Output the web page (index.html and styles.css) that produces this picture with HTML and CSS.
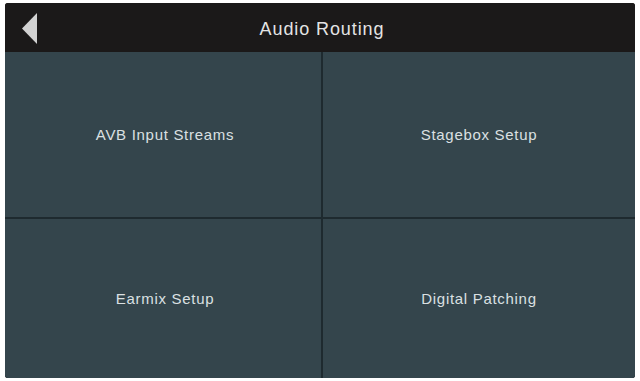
FILE: index.html
```html
<!DOCTYPE html>
<html lang="en">

<head>
    <meta charset="UTF-8">
    <meta name="viewport" content="width=device-width, initial-scale=1.0">
    <title>Audio Routing</title>
    <link rel="stylesheet" href="styles.css">
</head>

<body>
    <div class="screen">
        <header class="title-bar">
            <button class="back" aria-label="Back">
                <svg width="16" height="31" viewBox="0 0 16 31">
                    <polygon points="0,15.5 15,0 15,31" fill="#d2d2d2" />
                </svg>
            </button>
            <h1>Audio Routing</h1>
        </header>

        <!-- Routing menu tiles -->
        <main class="tiles">
            <div class="tile">AVB Input Streams</div>
            <div class="tile">Stagebox Setup</div>
            <div class="tile">Earmix Setup</div>
            <div class="tile">Digital Patching</div>
        </main>
    </div>
</body>

</html>
```

FILE: styles.css
```css
body {
    margin: 0;
    padding: 0;
    background-color: #ffffff;
    font-family: "Liberation Sans", Arial, sans-serif;
}

.screen {
    margin: 3px 5px;
    width: 630px;
    height: 375px;
    background-color: #1b1919;
    border-radius: 3px;
    overflow: hidden;
    display: flex;
    flex-direction: column;
}

.title-bar {
    height: 49px;
    position: relative;
    display: flex;
    align-items: center;
    justify-content: center;
    background-color: #1b1919;
}

.title-bar h1 {
    margin: 0;
    padding: 3px 0 0 4px;
    font-size: 18px;
    font-weight: normal;
    letter-spacing: 0.9px;
    color: #e4e4e4;
}

.back {
    position: absolute;
    left: 17px;
    top: 10px;
    padding: 0;
    border: none;
    background: none;
    cursor: pointer;
}

.tiles {
    flex: 1;
    display: grid;
    grid-template-columns: 316px 1fr;
    grid-template-rows: 165px 1fr;
    gap: 2px;
    background-color: #1e2a2f;
}

.tile {
    background-color: #34454c;
    color: #dbe0e2;
    font-size: 15px;
    letter-spacing: 0.7px;
    display: flex;
    align-items: center;
    justify-content: center;
}

.tile:nth-child(odd) {
    padding-left: 4px;
}
```
